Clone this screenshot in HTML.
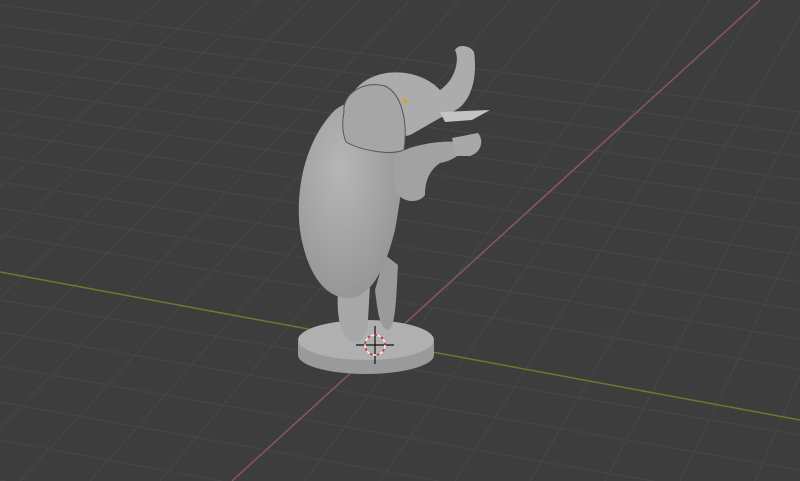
<!DOCTYPE html>
<html><head><style>html,body{margin:0;padding:0;background:#3d3d3d;overflow:hidden;width:800px;height:481px}svg{display:block}</style></head>
<body>
<svg width="800" height="481" viewBox="0 0 800 481" xmlns="http://www.w3.org/2000/svg">
<defs>
<radialGradient id="b" cx="0.4" cy="0.35" r="0.7"><stop offset="0" stop-color="#b6b6b6"/><stop offset="1" stop-color="#949494"/></radialGradient>
</defs>
<rect width="800" height="481" fill="#3d3d3d"/>
<g stroke="#474747" stroke-width="1" fill="none">
<path d="M0,5 L800,112 M0,25 L800,134 M0,45 L800,156 M0,66 L800,180 M0,88 L800,204 M0,110 L800,229 M0,133 L800,255 M0,157 L800,282 M0,182 L800,310 M0,208 L800,339 M0,235 L800,369 M0,300 L800,435 M0,332 L800,470 M0,366 L800,507 M0,402 L800,546 M0,440 L800,588 M0,480 L800,632"/>
<path d="M-400,481 L160,0 M-330,481 L210,0 M-260,481 L260,0 M-190,481 L310,0 M-120,481 L360,0 M-50,481 L410,0 M20,481 L460,0 M90,481 L510,0 M160,481 L560,0 M305,481 L660,0 M380,481 L710,0 M455,481 L760,0 M530,481 L810,0 M605,481 L860,0 M680,481 L910,0 M755,481 L960,0 M830,481 L1010,0"/>
</g>
<line x1="0" y1="272" x2="800" y2="420" stroke="#6b7a2c" stroke-width="1.5"/>
<line x1="232" y1="481" x2="760" y2="0" stroke="#8a5660" stroke-width="1.5"/>
<!-- base -->
<path d="M298,342 L298,355 A68,19 0 0 0 434,355 L434,342 Z" fill="#9a9a9a"/>
<ellipse cx="366" cy="340" rx="68" ry="20" fill="#b0b0b0"/>
<!-- legs -->
<path d="M338,290 C336,320 342,338 352,342 C362,344 368,335 368,320 L370,285 Z" fill="#a8a8a8"/>
<path d="M375,290 C378,315 380,328 388,330 C396,326 396,300 398,265 L385,255 Z" fill="#9a9a9a"/>
<!-- body -->
<path d="M335,110 C305,140 295,190 300,230 C305,265 320,295 345,298 C370,300 385,270 395,230 C402,190 408,150 400,120 C385,95 355,95 335,110 Z" fill="url(#b)"/>
<!-- head -->
<path d="M355,90 C375,65 420,68 440,90 C455,80 460,60 455,50 C458,44 470,45 474,52 C478,80 470,105 452,112 C435,120 420,130 410,135 C395,140 370,130 355,90 Z" fill="#acacac"/>
<!-- ear -->
<path d="M344,112 C342,95 362,80 385,86 C402,94 408,122 404,150 C390,156 360,150 346,142 C342,132 342,122 344,112 Z" fill="#a6a6a6" stroke="#555" stroke-width="1"/>
<!-- tusk -->
<path d="M440,112 L490,110 L472,120 L445,122 Z" fill="#c4c4c4"/>
<!-- arms -->
<path d="M395,155 C410,145 440,140 458,142 C468,148 458,160 440,163 C430,170 425,180 425,195 C418,205 400,202 395,190 Z" fill="#a2a2a2"/>
<path d="M452,138 L478,133 C484,140 482,152 470,156 L456,156 Z" fill="#a8a8a8"/>
<circle cx="405" cy="101" r="2.5" fill="#d8a040"/>
<!-- 3D cursor -->
<g stroke="#111" stroke-width="1.2"><line x1="375" y1="326" x2="375" y2="364"/><line x1="356" y1="345" x2="394" y2="345"/></g>
<circle cx="375" cy="345" r="10" fill="none" stroke="#f0f0f0" stroke-width="1.5" stroke-dasharray="4 3"/>
<circle cx="375" cy="345" r="10" fill="none" stroke="#c33" stroke-width="1.5" stroke-dasharray="3 4" stroke-dashoffset="3"/>
</svg>
</body></html>
